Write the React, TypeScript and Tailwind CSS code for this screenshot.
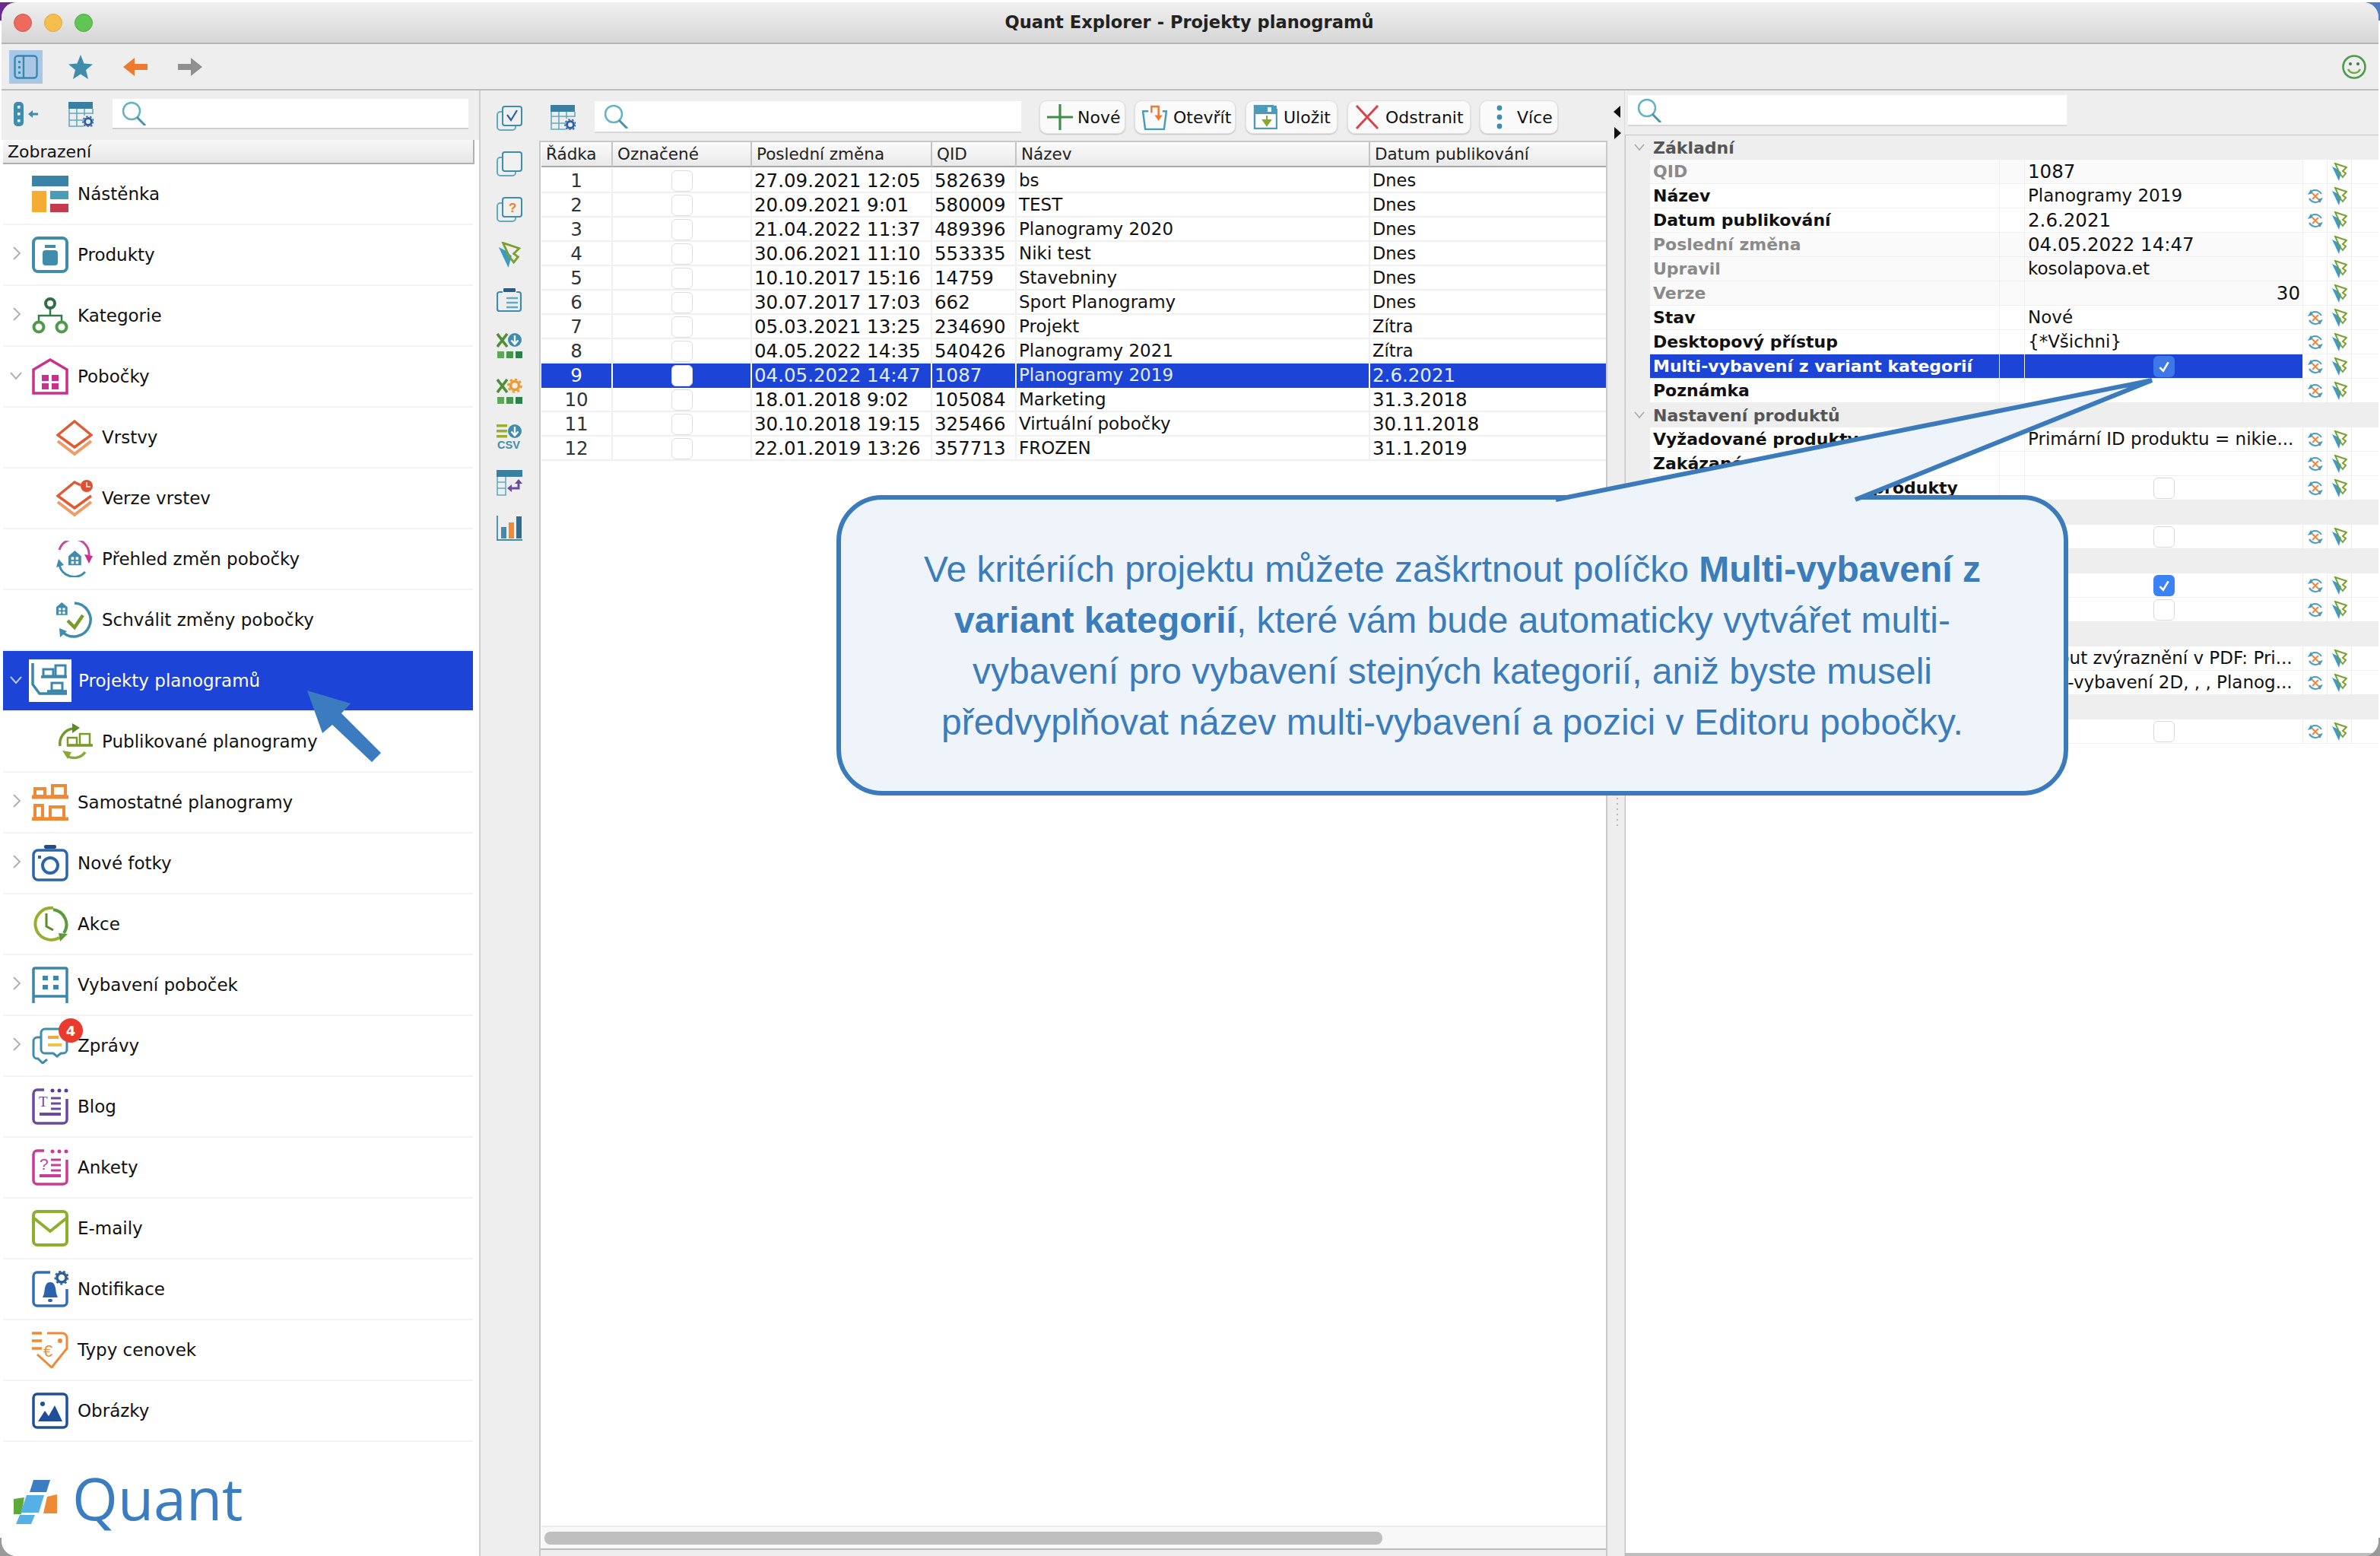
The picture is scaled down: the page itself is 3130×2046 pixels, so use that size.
import type { ReactNode } from 'react';

const base = 'w-[48px] h-[48px] shrink-0';

function Svg({ children, box = 48, className = base }: { children: ReactNode; box?: number; className?: string }) {
  return (
    <svg viewBox={`0 0 ${box} ${box}`} className={className} fill="none">
      {children}
    </svg>
  );
}

const House = ({ x, y, s, c }: { x: number; y: number; s: number; c: string }) => (
  <g transform={`translate(${x} ${y}) scale(${s})`}>
    <path d="M0 6 L7 0 L14 6 V16 H0 Z" fill={c} />
    <rect x="3" y="7" width="3" height="3" fill="#fff" />
    <rect x="8" y="7" width="3" height="3" fill="#fff" />
    <rect x="3" y="11.5" width="3" height="3" fill="#fff" />
    <rect x="8" y="11.5" width="3" height="3" fill="#fff" />
  </g>
);

// sidebar icons
const icons: Record<string, ReactNode> = {
  nastenka: (
    <Svg>
      <rect width="48" height="14" fill="#3a82a6" />
      <rect y="20" width="19" height="28" fill="#f4ac35" />
      <rect x="24" y="20" width="24" height="11" fill="#4a9cb8" />
      <rect x="24" y="37" width="24" height="11" fill="#c43a4e" />
    </Svg>
  ),
  produkty: (
    <Svg>
      <rect x="2" y="2" width="44" height="44" rx="6" stroke="#3f8cad" strokeWidth="4" />
      <rect x="17" y="11" width="14" height="4" fill="#3f8cad" />
      <rect x="14" y="18" width="20" height="20" rx="4" fill="#3f8cad" />
    </Svg>
  ),
  kategorie: (
    <Svg>
      <path d="M24 14 V24 M9 33 V24 H39 V33" stroke="#357a4a" strokeWidth="2.5" />
      <circle cx="24" cy="8" r="6" stroke="#2f6e44" strokeWidth="4" fill="#fff" />
      <circle cx="9" cy="39" r="6.5" stroke="#4e9a4a" strokeWidth="4" fill="#fff" />
      <circle cx="39" cy="39" r="6.5" stroke="#4e9a4a" strokeWidth="4" fill="#fff" />
    </Svg>
  ),
  pobocky: (
    <Svg>
      <path d="M2 46 V15 L24 2 L46 15 V46 Z" stroke="#c9318f" strokeWidth="3.5" />
      <rect x="13" y="22" width="9" height="8" fill="#c9318f" />
      <rect x="26" y="22" width="9" height="8" fill="#c9318f" />
      <rect x="13" y="33" width="9" height="8" fill="#c9318f" />
      <rect x="26" y="33" width="9" height="8" fill="#c9318f" />
    </Svg>
  ),
  vrstvy: (
    <Svg>
      <path d="M24 3 L46 21 L24 37 L2 21 Z" stroke="#e05a34" strokeWidth="3.5" />
      <path d="M2 29 L24 46 L46 29" stroke="#f09a68" strokeWidth="4" />
    </Svg>
  ),
  verze: (
    <Svg>
      <path d="M32 7 L24 3 L2 21 L24 37 L46 21" stroke="#e05a34" strokeWidth="3.5" />
      <path d="M2 29 L24 46 L46 29" stroke="#f09a68" strokeWidth="4" />
      <circle cx="40" cy="8" r="8" fill="#e05030" />
      <path d="M40 3 V9 H45" stroke="#fff" strokeWidth="1.5" />
    </Svg>
  ),
  prehled: (
    <Svg>
      <path d="M4 12 A20 20 0 0 1 43 20" stroke="#c9489a" strokeWidth="3" />
      <path d="M37 18 L48 20 L43 30 Z" fill="#c9318f" />
      <path d="M38 41 A20 20 0 0 1 4 32" stroke="#3f8cad" strokeWidth="3" />
      <path d="M0 35 L3 24 L10 32 Z" fill="#3f8cad" />
      <House x={16} y={13} s={1.2} c="#3f8cad" />
    </Svg>
  ),
  schvalit: (
    <Svg>
      <path d="M24 2 A22 22 0 1 1 8 40" stroke="#3f8cad" strokeWidth="3.5" />
      <path d="M5 47 L4 35 L14 39 Z" fill="#3f8cad" />
      <path d="M15 25 L24 34 L35 18" stroke="#7a9a2a" strokeWidth="4.5" />
      <House x={0} y={1} s={1.05} c="#3f8cad" />
    </Svg>
  ),
  publikovane: (
    <Svg>
      <path d="M5 30 A20 20 0 0 1 22 7" stroke="#6f9a30" strokeWidth="3.5" />
      <path d="M21 0 L31 6 L21 13 Z" fill="#5d8a2a" />
      <path d="M38 38 A18 18 0 0 1 16 44" stroke="#8aa83a" strokeWidth="3.5" />
      <path d="M8 36 L20 38 L15 47 Z" fill="#8aa83a" />
      <path d="M14 29 H48" stroke="#7a9a2a" strokeWidth="3.5" />
      <rect x="15" y="19" width="12" height="10" stroke="#7a9a2a" strokeWidth="2.5" />
      <rect x="31" y="14" width="13" height="15" stroke="#7a9a2a" strokeWidth="2.5" />
    </Svg>
  ),
  samostatne: (
    <Svg>
      <path d="M0 17 H48 M0 46 H48" stroke="#ee8a35" strokeWidth="5" />
      <rect x="4" y="6" width="13" height="10" stroke="#ee8a35" strokeWidth="4" />
      <rect x="27" y="2" width="17" height="14" stroke="#ee8a35" strokeWidth="4" />
      <rect x="4" y="28" width="10" height="17" stroke="#ee8a35" strokeWidth="4" />
      <rect x="24" y="30" width="18" height="15" stroke="#ee8a35" strokeWidth="4" />
    </Svg>
  ),
  fotky: (
    <Svg>
      <rect x="2" y="7" width="44" height="39" rx="6" stroke="#2b66a8" strokeWidth="3.5" />
      <rect x="16" y="0" width="16" height="5" rx="2" fill="#1f4f88" />
      <circle cx="24" cy="27" r="10" stroke="#2b66a8" strokeWidth="4" />
      <rect x="8" y="14" width="4" height="4" fill="#2b66a8" />
    </Svg>
  ),
  akce: (
    <Svg>
      <path d="M28 3 A21 21 0 1 0 36 42" stroke="#9aae2e" strokeWidth="4" />
      <path d="M28 5 A20 20 0 0 1 42 36" stroke="#5d9a3e" strokeWidth="4" />
      <path d="M35 36 L47 37 L37 47 Z" fill="#5d9a3e" />
      <path d="M19 10 V27 L28 32" stroke="#5d8a2a" strokeWidth="3" />
    </Svg>
  ),
  vybaveni: (
    <Svg>
      <path d="M2 48 V4 a2 2 0 0 1 2 -2 H44 a2 2 0 0 1 2 2 V48 M2 39 H46" stroke="#3a87ab" strokeWidth="3.5" />
      <rect x="14" y="12" width="7" height="6" fill="#3a87ab" />
      <rect x="28" y="12" width="7" height="6" fill="#3a87ab" />
      <rect x="14" y="24" width="7" height="6" fill="#3a87ab" />
      <rect x="28" y="24" width="7" height="6" fill="#3a87ab" />
    </Svg>
  ),
  zpravy: (
    <Svg>
      <path d="M12 13 H7 a5 5 0 0 0 -5 5 V36 a5 5 0 0 0 5 5 H8 L14 47 L20 42" stroke="#3f8cad" strokeWidth="3" />
      <path d="M17 2 H41 a5 5 0 0 1 5 5 V29 a5 5 0 0 1 -5 5 H38 L33 38 L28 34 H17 a5 5 0 0 1 -5 -5 V7 a5 5 0 0 1 5 -5 Z" stroke="#3f8cad" strokeWidth="3" fill="#fff" />
      <rect x="21" y="11" width="14" height="4" fill="#f0a838" />
      <rect x="21" y="21" width="18" height="4" fill="#f0c048" />
    </Svg>
  ),
  blog: (
    <Svg>
      <path d="M16 2 H7 a5 5 0 0 0 -5 5 V41 a5 5 0 0 0 5 5 H41 a5 5 0 0 0 5 -5 V14" stroke="#6a4aa0" strokeWidth="3.5" />
      <circle cx="27" cy="3" r="2.5" fill="#5a3a98" />
      <circle cx="36" cy="3" r="2.5" fill="#5a3a98" />
      <circle cx="45" cy="3" r="2.5" fill="#5a3a98" />
      <text x="9" y="24" fontFamily="Liberation Serif, serif" fontSize="19" fill="#6a4aa0">T</text>
      <path d="M25 13 H38 M25 20 H38 M25 27 H38" stroke="#6a4aa0" strokeWidth="3" />
      <path d="M10 34 H38" stroke="#6a4aa0" strokeWidth="4" />
    </Svg>
  ),
  ankety: (
    <Svg>
      <path d="M16 2 H7 a5 5 0 0 0 -5 5 V41 a5 5 0 0 0 5 5 H41 a5 5 0 0 0 5 -5 V14" stroke="#cc3a98" strokeWidth="3.5" />
      <circle cx="27" cy="3" r="2.5" fill="#cc3a98" />
      <circle cx="36" cy="3" r="2.5" fill="#cc3a98" />
      <circle cx="45" cy="3" r="2.5" fill="#cc3a98" />
      <text x="10" y="27" fontFamily="Liberation Sans, sans-serif" fontSize="21" fill="#cc3a98">?</text>
      <path d="M25 14 H38 M25 21 H38 M25 28 H38" stroke="#cc3a98" strokeWidth="3" />
      <path d="M10 35 H38" stroke="#cc3a98" strokeWidth="4" />
    </Svg>
  ),
  emaily: (
    <Svg>
      <rect x="2" y="2" width="44" height="44" rx="5" stroke="#8eae2e" strokeWidth="4" />
      <path d="M3 11 L24 28 L45 11" stroke="#8eae2e" strokeWidth="4" />
    </Svg>
  ),
  notifikace: (
    <Svg>
      <path d="M24 2 H7 a5 5 0 0 0 -5 5 V41 a5 5 0 0 0 5 5 H41 a5 5 0 0 0 5 -5 V24" stroke="#2f6eb8" strokeWidth="3.5" />
      <path d="M24 15 C17 15 17 23 16 30 L14 35 H34 L32 30 C31 23 31 15 24 15 Z" fill="#2b62ac" />
      <rect x="21" y="37" width="6" height="4" rx="2" fill="#2b62ac" />
      <circle cx="39" cy="9" r="6" stroke="#2b5f98" strokeWidth="3.5" />
      <circle cx="39" cy="9" r="8.5" stroke="#2b5f98" strokeWidth="2" strokeDasharray="3 3" />
    </Svg>
  ),
  cenovky: (
    <Svg>
      <path d="M0 2 H13 M0 12 H13 M0 22 H13" stroke="#ee8a35" strokeWidth="3.5" />
      <path d="M20 2 H40 a6 6 0 0 1 6 6 V22 L26 47 L7 30" stroke="#ee8a35" strokeWidth="3" />
      <circle cx="37" cy="12" r="3" fill="#ee8a35" />
      <text x="15" y="33" fontFamily="Liberation Sans, sans-serif" fontSize="22" fill="#ee8a35">€</text>
    </Svg>
  ),
  obrazky: (
    <Svg>
      <rect x="2" y="2" width="44" height="44" rx="5" stroke="#1f4f98" strokeWidth="3.5" />
      <circle cx="14" cy="15" r="3" fill="#1f4f98" />
      <path d="M8 38 L17 24 L22 31 L30 17 L40 38 Z" fill="#1f4f98" />
    </Svg>
  ),
  projekty: (
    <svg viewBox="0 0 56 56" className="w-[56px] h-[56px] shrink-0 bg-white">
      <path d="M5 5 V33 L14 45 H50 M16 23 H50" fill="none" stroke="#3a87ab" strokeWidth="3.5" />
      <rect x="19" y="13" width="13" height="9" fill="none" stroke="#3a87ab" strokeWidth="3" />
      <rect x="35" y="8" width="13" height="14" fill="none" stroke="#3a87ab" strokeWidth="3" />
      <rect x="30" y="31" width="14" height="10" fill="none" stroke="#3a87ab" strokeWidth="3" />
      <path d="M24 42 H50" stroke="#3a87ab" strokeWidth="3.5" />
    </svg>
  ),
};

type NavItem = { label: string; icon: string; sub?: boolean; chevron?: 'right' | 'down'; selected?: boolean; badge?: string };

const nav: NavItem[] = [
  { label: 'Nástěnka', icon: 'nastenka' },
  { label: 'Produkty', icon: 'produkty', chevron: 'right' },
  { label: 'Kategorie', icon: 'kategorie', chevron: 'right' },
  { label: 'Pobočky', icon: 'pobocky', chevron: 'down' },
  { label: 'Vrstvy', icon: 'vrstvy', sub: true },
  { label: 'Verze vrstev', icon: 'verze', sub: true },
  { label: 'Přehled změn pobočky', icon: 'prehled', sub: true },
  { label: 'Schválit změny pobočky', icon: 'schvalit', sub: true },
  { label: 'Projekty planogramů', icon: 'projekty', chevron: 'down', selected: true },
  { label: 'Publikované planogramy', icon: 'publikovane', sub: true },
  { label: 'Samostatné planogramy', icon: 'samostatne', chevron: 'right' },
  { label: 'Nové fotky', icon: 'fotky', chevron: 'right' },
  { label: 'Akce', icon: 'akce' },
  { label: 'Vybavení poboček', icon: 'vybaveni', chevron: 'right' },
  { label: 'Zprávy', icon: 'zpravy', chevron: 'right', badge: '4' },
  { label: 'Blog', icon: 'blog' },
  { label: 'Ankety', icon: 'ankety' },
  { label: 'E-maily', icon: 'emaily' },
  { label: 'Notifikace', icon: 'notifikace' },
  { label: 'Typy cenovek', icon: 'cenovky' },
  { label: 'Obrázky', icon: 'obrazky' },
];

const tableRows = [
  ['1', '27.09.2021 12:05', '582639', 'bs', 'Dnes'],
  ['2', '20.09.2021 9:01', '580009', 'TEST', 'Dnes'],
  ['3', '21.04.2022 11:37', '489396', 'Planogramy 2020', 'Dnes'],
  ['4', '30.06.2021 11:10', '553335', 'Niki test', 'Dnes'],
  ['5', '10.10.2017 15:16', '14759', 'Stavebniny', 'Dnes'],
  ['6', '30.07.2017 17:03', '662', 'Sport Planogramy', 'Dnes'],
  ['7', '05.03.2021 13:25', '234690', 'Projekt', 'Zítra'],
  ['8', '04.05.2022 14:35', '540426', 'Planogramy 2021', 'Zítra'],
  ['9', '04.05.2022 14:47', '1087', 'Planogramy 2019', '2.6.2021'],
  ['10', '18.01.2018 9:02', '105084', 'Marketing', '31.3.2018'],
  ['11', '30.10.2018 19:15', '325466', 'Virtuální pobočky', '30.11.2018'],
  ['12', '22.01.2019 13:26', '357713', 'FROZEN', '31.1.2019'],
];

type Prop = {
  section?: boolean;
  label?: string;
  value?: string;
  tone?: 'bold' | 'muted';
  num?: boolean;
  right?: boolean;
  check?: 'on' | 'off';
  selected?: boolean;
  locked?: boolean;
  flush?: boolean;
};

const props: Prop[] = [
  { section: true, label: 'Základní' },
  { label: 'QID', value: '1087', tone: 'muted', num: true, locked: true },
  { label: 'Název', value: 'Planogramy 2019', tone: 'bold' },
  { label: 'Datum publikování', value: '2.6.2021', tone: 'bold', num: true },
  { label: 'Poslední změna', value: '04.05.2022 14:47', tone: 'muted', num: true, locked: true },
  { label: 'Upravil', value: 'kosolapova.et', tone: 'muted', locked: true },
  { label: 'Verze', value: '30', tone: 'muted', num: true, right: true, locked: true },
  { label: 'Stav', value: 'Nové', tone: 'bold' },
  { label: 'Desktopový přístup', value: '{*Všichni}', tone: 'bold' },
  { label: 'Multi-vybavení z variant kategorií', check: 'on', selected: true },
  { label: 'Poznámka', tone: 'bold' },
  { section: true, label: 'Nastavení produktů' },
  { label: 'Vyžadované produkty', value: 'Primární ID produktu = nikie...', tone: 'bold' },
  { label: 'Zakázané produkty', tone: 'bold' },
  { label: 'Použít pouze povolené produkty', tone: 'bold', check: 'off' },
  { section: true },
  { check: 'off' },
  { section: true },
  { check: 'on' },
  { check: 'off' },
  { section: true },
  { value: 'Layout zvýraznění v PDF: Pri...' },
  { value: 'Multi-vybavení 2D, , , Planog...', flush: true },
  { section: true },
  { check: 'off' },
];

const SearchIcon = () => (
  <svg viewBox="0 0 32 32" className="w-[32px] h-[32px] shrink-0" fill="none">
    <circle cx="13" cy="13" r="11" stroke="#62b2c4" strokeWidth="2.5" />
    <path d="M20 21 L31 32" stroke="#4a90a8" strokeWidth="3" />
  </svg>
);

const GridGear = () => (
  <svg viewBox="0 0 33 33" className="w-[33px] h-[33px] shrink-0" fill="none">
    <rect width="32" height="9" fill="#3a7fa2" />
    <path d="M1 9 V32 H20 M11 9 V32 M21 9 V18 M1 15 H32 M1 24 H20 M32 9 V16" stroke="#62aac0" strokeWidth="1.6" />
    <circle cx="26" cy="26" r="4.5" stroke="#2b5fa8" strokeWidth="3" />
    <circle cx="26" cy="26" r="7" stroke="#2b5fa8" strokeWidth="1.6" strokeDasharray="2.5 2.5" />
  </svg>
);

const ResetIcon = () => (
  <svg viewBox="0 0 20 24" className="w-[20px] h-[24px]" fill="none">
    <path d="M4 6 A9.5 9.5 0 0 1 18 9" stroke="#4a9cc0" strokeWidth="2" />
    <path d="M16 18 A9.5 9.5 0 0 1 2 15" stroke="#4a9cc0" strokeWidth="2" />
    <path d="M0 10 L4 3 L7 8 Z M20 14 L16 21 L13 16 Z" fill="#4a9cc0" />
    <path d="M6 8 L14 16 M14 8 L6 16" stroke="#ee8a45" strokeWidth="2.2" />
  </svg>
);

const CursorIcon = ({ className = 'w-[20px] h-[24px]' }: { className?: string }) => (
  <svg viewBox="0 0 20 24" className={className} fill="none">
    <path d="M0 5 L9 24 L12 13 L6 8 Z" fill="#3a9cc4" />
    <path d="M4 1 L19 6 L14 11 L18 14 L14 19 L10 14 Z" stroke="#7aa02e" strokeWidth="2" />
  </svg>
);

const stripIcon = 'w-[34px] h-[34px]';

const strip: ReactNode[] = [
  <Svg box={34} className={stripIcon}>
    <rect x="1" y="9" width="24" height="24" rx="4" stroke="#62aac0" strokeWidth="2" />
    <rect x="8" y="2" width="25" height="25" rx="3" fill="#f0f0f0" stroke="#3f8cad" strokeWidth="2" />
    <path d="M14 13 L19 20 L27 7" stroke="#2b5fa8" strokeWidth="2.2" />
  </Svg>,
  <Svg box={34} className={stripIcon}>
    <rect x="1" y="9" width="24" height="24" rx="4" stroke="#62aac0" strokeWidth="2" />
    <rect x="8" y="2" width="25" height="25" rx="3" fill="#f0f0f0" stroke="#3f8cad" strokeWidth="2" />
  </Svg>,
  <Svg box={34} className={stripIcon}>
    <rect x="1" y="9" width="24" height="24" rx="4" stroke="#62aac0" strokeWidth="2" />
    <rect x="8" y="2" width="25" height="25" rx="3" fill="#f0f0f0" stroke="#3f8cad" strokeWidth="2" />
    <text x="16" y="21" fontFamily="Liberation Sans, sans-serif" fontWeight="700" fontSize="17" fill="#e8802e">?</text>
  </Svg>,
  <CursorIcon className="w-[34px] h-[34px]" />,
  <Svg box={34} className={stripIcon}>
    <path d="M8 6 H4 a3 3 0 0 0 -3 3 V28 a3 3 0 0 0 3 3 H29 a3 3 0 0 0 3 -3 V9 a3 3 0 0 0 -3 -3 H26" stroke="#3f8cad" strokeWidth="2.2" />
    <rect x="9" y="1" width="16" height="5" rx="1" fill="#1f5f88" />
    <path d="M13 14 H28 M13 20 H28 M13 26 H28" stroke="#62aac0" strokeWidth="2.4" />
  </Svg>,
  <Svg box={34} className={stripIcon}>
    <path d="M1 1 L14 18 M14 1 L1 18" stroke="#4f8f3a" strokeWidth="3.6" />
    <circle cx="24" cy="9" r="9" fill="#3f8cad" />
    <path d="M24 3 V14 M19.5 9.5 L24 14.5 L28.5 9.5" stroke="#fff" strokeWidth="2.4" />
    <rect x="1" y="24" width="9" height="9" fill="#5fa85a" />
    <rect x="13" y="24" width="9" height="9" fill="#4a9650" />
    <rect x="25" y="24" width="9" height="9" fill="#2f7f4a" />
  </Svg>,
  <Svg box={34} className={stripIcon}>
    <path d="M1 1 L14 18 M14 1 L1 18" stroke="#4f8f3a" strokeWidth="3.6" />
    <circle cx="24" cy="9" r="5.5" stroke="#ee9a30" strokeWidth="3.5" />
    <circle cx="24" cy="9" r="8.5" stroke="#ee9a30" strokeWidth="2.6" strokeDasharray="3.4 3.2" />
    <rect x="1" y="24" width="9" height="9" fill="#5fa85a" />
    <rect x="13" y="24" width="9" height="9" fill="#4a9650" />
    <rect x="25" y="24" width="9" height="9" fill="#2f7f4a" />
  </Svg>,
  <Svg box={34} className={stripIcon}>
    <rect x="0" y="0" width="14" height="3.5" fill="#9aae2e" />
    <rect x="0" y="7" width="14" height="3.5" fill="#9aae2e" />
    <rect x="0" y="14" width="14" height="3.5" fill="#9aae2e" />
    <circle cx="24" cy="9" r="9" fill="#3f8cad" />
    <path d="M24 3 V14 M19.5 9.5 L24 14.5 L28.5 9.5" stroke="#fff" strokeWidth="2.4" />
    <text x="1" y="32" fontFamily="Liberation Sans, sans-serif" fontWeight="700" fontSize="14.5" fill="#3f8cad">CSV</text>
  </Svg>,
  <Svg box={34} className={stripIcon}>
    <rect width="34" height="9" fill="#3a7fa2" />
    <path d="M1 9 V33 H12 V9 M1 16 H12 M1 24 H12" stroke="#62aac0" strokeWidth="1.6" />
    <path d="M29 14 V24 H19" stroke="#6a4aa0" strokeWidth="3" />
    <path d="M24 18 L29 12 L34 18 Z M20 19 L14 24 L20 29 Z" fill="#6a4aa0" />
  </Svg>,
  <Svg box={34} className={stripIcon}>
    <path d="M1 0 V32 H34" stroke="#3f8cad" strokeWidth="1.8" />
    <rect x="6" y="15" width="7" height="15" fill="#3f8cad" />
    <rect x="16" y="9" width="7" height="21" fill="#ee8a35" />
    <rect x="26" y="1" width="7" height="29" fill="#2f6f94" />
  </Svg>,
];

const DATE = 'text-[24.5px]';

function Chevron({ dir, white }: { dir: 'right' | 'down'; white?: boolean }) {
  const stroke = white ? '#b8c8f0' : '#b0b0b0';
  return dir === 'right' ? (
    <svg viewBox="0 0 12 20" className="w-[12px] h-[20px] ml-[12px] -mt-[4px]" fill="none">
      <path d="M2 2 L10 10 L2 18" stroke={stroke} strokeWidth="2" />
    </svg>
  ) : (
    <svg viewBox="0 0 18 12" className="w-[18px] h-[12px] ml-[8px] -mt-[2px]" fill="none">
      <path d="M2 2 L9 10 L16 2" stroke={stroke} strokeWidth="2" />
    </svg>
  );
}

function NavRow({ item }: { item: NavItem }) {
  const lead = item.sub ? 'w-[70px]' : item.selected ? 'w-[34px]' : 'w-[38px]';
  return (
    <div
      className={`h-[80px] flex items-center border-b-2 border-[#f2f2f2] ${
        item.selected ? 'bg-[#1c44d6] text-white' : 'bg-white text-[#111]'
      }`}
    >
      <div className={`${lead} shrink-0`}>{item.chevron && <Chevron dir={item.chevron} white={item.selected} />}</div>
      <div className="relative shrink-0">
        {icons[item.icon]}
        {item.badge && (
          <span className="absolute left-[35px] -top-[12px] w-[32px] h-[32px] rounded-full bg-[#e93a2e] text-white text-[18px] font-bold flex items-center justify-center z-10">
            {item.badge}
          </span>
        )}
      </div>
      <span className={`text-[23px] whitespace-nowrap ${item.selected ? 'ml-[9px]' : 'ml-[12px]'}`}>{item.label}</span>
    </div>
  );
}

function Checkbox({ state, selected }: { state: 'on' | 'off'; selected?: boolean }) {
  if (state === 'on') {
    return (
      <span className={`w-[28px] h-[28px] rounded-[6px] flex items-center justify-center ${selected ? 'bg-[#3d78e6]' : 'bg-[#3b82f6]'}`}>
        <svg viewBox="0 0 16 16" className="w-[18px] h-[18px]" fill="none">
          <path d="M3 9 L7 13 L13 3" stroke="#fff" strokeWidth="2.4" />
        </svg>
      </span>
    );
  }
  return <span className="w-[28px] h-[28px] rounded-[6px] border border-[#d8d8d8] bg-white" />;
}

function ToolButton({ icon, label, width, gap }: { icon: ReactNode; label: string; width: string; gap: string }) {
  return (
    <div className={`${width} ${gap} h-[44px] flex items-center pl-[9px] rounded-[10px] bg-[#fafafa] border border-[#e2e2e2] shadow-[0_1px_2px_rgba(0,0,0,0.2)] text-[22px] text-[#111]`}>
      {icon}
      <span>{label}</span>
    </div>
  );
}

function PropRow({ row }: { row: Prop }) {
  if (row.section) {
    return (
      <div className="h-[32px] bg-[#eeeeee] flex items-center pl-[11px]">
        {row.label && (
          <>
            <svg viewBox="0 0 14 10" className="w-[14px] h-[10px]" fill="none">
              <path d="M1 1 L7 8 L13 1" stroke="#a8a8a8" strokeWidth="1.6" />
            </svg>
            <span className="ml-[11px] text-[22px] font-bold text-[#555]">{row.label}</span>
          </>
        )}
      </div>
    );
  }
  const labelTone = row.selected
    ? 'bg-[#1c44d6] text-white font-bold'
    : row.tone === 'muted'
      ? 'text-[#8a8a8a] font-bold'
      : 'text-[#111] font-bold';
  const cellBg = row.selected ? 'bg-[#1c44d6]' : row.locked ? 'bg-[#fafafa]' : 'bg-white';
  return (
    <div className="h-[32px] grid grid-cols-[32px_460px_33px_366px_32px_32px_1fr] border-b border-[#efefef] bg-white">
      <div className="bg-[#eeeeee]" />
      <div className={`${labelTone} ${row.locked ? 'bg-[#fafafa]' : ''} border-r border-[#efefef] pl-[4px] text-[22px] leading-[31px] whitespace-nowrap overflow-hidden`}>
        {row.label}
      </div>
      <div className={`${cellBg} border-r border-[#efefef]`} />
      <div
        className={`${cellBg} border-r border-[#efefef] ${row.flush ? 'pl-0' : 'pl-[4px]'} pr-[3px] leading-[31px] whitespace-nowrap overflow-hidden text-[#111] ${
          row.num ? DATE : 'text-[23px]'
        } ${row.right ? 'text-right' : ''} ${row.check ? 'flex items-center justify-center' : ''}`}
      >
        {row.check ? <Checkbox state={row.check} selected={row.selected} /> : row.value}
      </div>
      <div className="border-r border-[#efefef] flex items-center justify-center">{!row.locked && <ResetIcon />}</div>
      <div className="border-r border-[#efefef] flex items-center justify-center">
        <CursorIcon />
      </div>
      <div />
    </div>
  );
}

export default function App() {
  return (
    <div className="relative w-[3130px] h-[2046px] overflow-hidden bg-white font-['DejaVu_Sans',sans-serif]">
      {/* desktop showing at the window corners */}
      <div className="absolute left-0 top-[3px] w-[24px] h-[24px] bg-[#6a2c8e]" />
      <div className="absolute right-0 top-[3px] w-[24px] h-[24px] bg-[#4f7cc9]" />
      <div className="absolute left-0 bottom-0 w-[24px] h-[24px] bg-[#9a9a9a]" />
      <div className="absolute right-0 bottom-0 w-[24px] h-[24px] bg-[#9a9a9a]" />

      <div className="relative ml-[2px] mt-[3px] w-[3126px] h-[2043px] rounded-t-[20px] rounded-b-[20px] overflow-hidden flex flex-col bg-[#eeeeee]">
        {/* title bar */}
        <div className="h-[55px] shrink-0 flex items-center border-b-2 border-[#b4b4b4] bg-linear-to-b from-[#f0f0f0] to-[#d6d6d6] pl-[16px]">
          <div className="flex gap-[16px]">
            <span className="w-[24px] h-[24px] rounded-full bg-[#ed6a5e] border border-[#d9574c]" />
            <span className="w-[24px] h-[24px] rounded-full bg-[#f5bf4f] border border-[#dfa93e]" />
            <span className="w-[24px] h-[24px] rounded-full bg-[#61c554] border border-[#52ad46]" />
          </div>
          <div className="flex-1 text-center font-bold text-[22.6px] text-[#222] pr-[122px]">Quant Explorer - Projekty planogramů</div>
        </div>

        {/* toolbar */}
        <div className="h-[61px] shrink-0 flex items-center border-b-2 border-[#bdbdbd] pl-[10px] pr-[16px]">
          <div className="w-[44px] h-[44px] bg-[#a9c8e8] flex items-center justify-center">
            <svg viewBox="0 0 32 32" className="w-[32px] h-[32px]" fill="none">
              <rect x="1.5" y="1.5" width="29" height="29" rx="4" stroke="#3a87ab" strokeWidth="2.4" />
              <path d="M13 2 V30" stroke="#3a87ab" strokeWidth="2.4" />
              <rect x="6" y="8" width="3" height="3" fill="#3a87ab" />
              <rect x="6" y="15" width="3" height="3" fill="#3a87ab" />
              <rect x="6" y="22" width="3" height="3" fill="#3a87ab" />
            </svg>
          </div>
          <svg viewBox="0 0 32 32" className="w-[32px] h-[32px] ml-[34px]">
            <path d="M16 0 L20.5 11.5 L32 12.5 L23 20 L26 32 L16 25.5 L6 32 L9 20 L0 12.5 L11.5 11.5 Z" fill="#3f8cad" />
          </svg>
          <svg viewBox="0 0 32 24" className="w-[32px] h-[24px] ml-[40px]">
            <path d="M0 12 L15 0 V8 H32 V16 H15 V24 Z" fill="#ee7a30" />
          </svg>
          <svg viewBox="0 0 32 24" className="w-[32px] h-[24px] ml-[40px]">
            <path d="M32 12 L17 0 V8 H0 V16 H17 V24 Z" fill="#8f8f8f" />
          </svg>
          <svg viewBox="0 0 32 32" className="w-[32px] h-[32px] ml-auto" fill="none">
            <circle cx="16" cy="16" r="14.5" stroke="#4f9a4a" strokeWidth="2.6" />
            <circle cx="11" cy="12" r="2" fill="#3a7a44" />
            <circle cx="21" cy="12" r="2" fill="#3a7a44" />
            <path d="M8 19 A9 9 0 0 0 24 19" stroke="#6aaa3a" strokeWidth="2.4" />
          </svg>
        </div>

        <div className="flex-1 min-h-0 flex">
          {/* sidebar */}
          <div className="w-[628px] shrink-0 flex flex-col bg-white pl-[2px]">
            <div className="-ml-[2px] h-[65px] shrink-0 flex items-center bg-[#eeeeee] pl-[16px] pb-[3px]">
              <svg viewBox="0 0 32 32" className="w-[32px] h-[32px]">
                <rect width="13" height="32" rx="5" fill="#3f8cad" />
                <rect x="5" y="5" width="3.5" height="3.5" fill="#fff" />
                <rect x="5" y="14" width="3.5" height="3.5" fill="#fff" />
                <rect x="5" y="23" width="3.5" height="3.5" fill="#fff" />
                <path d="M19 16 L25 11 V14.5 H32 V17.5 H25 V21 Z" fill="#3f8cad" />
              </svg>
              <div className="ml-[40px]"><GridGear /></div>
              <div className="ml-[25px] w-[468px] h-[40px] bg-white border-b-2 border-[#cfcfcf] flex items-center pl-[12px]">
                <SearchIcon />
              </div>
            </div>
            <div className="w-[620px] h-[32px] shrink-0 flex items-center pl-[6px] text-[22px] text-[#111] bg-linear-to-b from-[#f8f8f8] to-[#e6e6e6] border-r-2 border-b-2 border-[#b0b0b0]">
              Zobrazení
            </div>
            <div className="w-[618px] flex flex-col">
              {nav.map((item) => (
                <NavRow key={item.label} item={item} />
              ))}
            </div>
            {/* logo */}
            <div className="flex items-center pl-[14px] mt-[42px]">
              <svg viewBox="0 0 58 58" className="w-[58px] h-[58px] mt-[2px]">
                <path d="M26 0 H48 L43 16 H21 Z" fill="#3a7dc0" />
                <path d="M0 25 L14 23 L10 45 L0 45 Z" fill="#5fa83a" />
                <path d="M17 20 H40 L33 43 H9 Z" fill="#55b0e6" />
                <path d="M44 22 L57 19 V44 L39 44 Z" fill="#ee8a35" />
                <path d="M8 46 H28 L23 58 H3 Z" fill="#55b0e6" />
              </svg>
              <span className="ml-[19px] font-['Open_Sans',sans-serif] text-[77px] leading-[80px] text-[#3a7dc0] -mt-[8px]">Quant</span>
            </div>
          </div>

          {/* center panel */}
          <div className="w-[1490px] shrink-0 flex border-l-2 border-[#cfcfcf]">
            <div className="w-[77px] shrink-0 flex flex-col items-center gap-[26px] pt-[19px] pr-[2px] bg-[#eeeeee]">
              {strip.map((icon, i) => (
                <div key={i} className="w-[34px] h-[34px]">
                  {icon}
                </div>
              ))}
            </div>
            <div className="w-[1411px] flex flex-col">
              <div className="h-[66px] shrink-0 flex items-center pl-[15px] pt-[4px]">
                <GridGear />
                <div className="ml-[25px] w-[561px] h-[42px] bg-white border-b-2 border-[#d8d8d8] flex items-center pl-[12px]">
                  <SearchIcon />
                </div>
                <div className="flex ml-[24px]">
                  <ToolButton
                    width="w-[113px]"
                    gap="mr-[12px]"
                    label="Nové"
                    icon={
                      <svg viewBox="0 0 32 32" className="w-[34px] h-[34px] mr-[6px] shrink-0">
                        <path d="M16 0 V32 M0 16 H32" stroke="#3f8f4a" strokeWidth="3" />
                      </svg>
                    }
                  />
                  <ToolButton
                    width="w-[133px]"
                    gap="mr-[13px]"
                    label="Otevřít"
                    icon={
                      <svg viewBox="0 0 32 32" className="w-[33px] h-[33px] mr-[8px] shrink-0" fill="none">
                        <path d="M8 8 H1 L4 31 H28 L31 8 H26" stroke="#4a9cb8" strokeWidth="2.4" />
                        <path d="M12 10 V2 H21 V14" stroke="#ee7a30" strokeWidth="2.4" />
                        <path d="M16 13 L21 20 L26 13 Z" fill="#ee7a30" />
                      </svg>
                    }
                  />
                  <ToolButton
                    width="w-[121px]"
                    gap="mr-[13px]"
                    label="Uložit"
                    icon={
                      <svg viewBox="0 0 32 32" className="w-[32px] h-[32px] mr-[8px] shrink-0" fill="none">
                        <path d="M2 1 H26 L31 6 V31 H2 Z" fill="#fff" stroke="#4a9cb8" strokeWidth="2.4" />
                        <path d="M2 1 H31 V12 H2 Z" fill="#4a9cb8" />
                        <rect x="19" y="3" width="5" height="6" fill="#fff" />
                        <path d="M18 14 V24 M13 20 L18 27 L23 20 Z" stroke="#8aa82e" strokeWidth="2" fill="#8aa82e" />
                      </svg>
                    }
                  />
                  <ToolButton
                    width="w-[162px]"
                    gap="mr-[12px]"
                    label="Odstranit"
                    icon={
                      <svg viewBox="0 0 32 32" className="w-[32px] h-[32px] mr-[8px] shrink-0">
                        <path d="M2 1 L30 31 M30 1 L2 31" stroke="#d8434a" strokeWidth="3" />
                      </svg>
                    }
                  />
                  <div className="w-[103px] h-[44px] flex items-center rounded-[10px] bg-[#fafafa] border border-[#e2e2e2] shadow-[0_1px_2px_rgba(0,0,0,0.2)] text-[22px] text-[#111] pl-[21px]">
                    <svg viewBox="0 0 8 32" className="w-[8px] h-[32px] mr-[19px]">
                      <circle cx="4" cy="4" r="3.4" fill="#3f8cad" />
                      <circle cx="4" cy="16" r="3.4" fill="#3f8cad" />
                      <circle cx="4" cy="28" r="3.4" fill="#3f8cad" />
                    </svg>
                    Více
                  </div>
                </div>
              </div>

              {/* table */}
              <div className="flex-1 min-h-0 flex flex-col w-[1405px] bg-white border-l-2 border-t-2 border-r-2 border-[#c8c8c8] pl-[1px]">
                <div className="h-[33px] shrink-0 grid grid-cols-[94px_183px_237px_111px_465px_1fr] border-b-2 border-[#a8a8a8] bg-linear-to-b from-[#fbfbfb] to-[#e9e9e9] text-[21.5px] text-[#222] leading-[32px]">
                  {['Řádka', 'Označené', 'Poslední změna', 'QID', 'Název', 'Datum publikování'].map((h) => (
                    <div key={h} className="pl-[6px] border-r-2 border-[#c4c4c4] last:border-r-0 whitespace-nowrap">
                      {h}
                    </div>
                  ))}
                </div>
                <div className="flex-1 min-h-0 pt-[2px]">
                  {tableRows.map((r) => {
                    const sel = r[0] === '9';
                    const line = sel ? 'border-white' : 'border-[#f0f0f0]';
                    return (
                      <div
                        key={r[0]}
                        className={`h-[32px] grid grid-cols-[94px_183px_237px_111px_465px_1fr] leading-[31px] whitespace-nowrap ${
                          sel ? 'bg-[#1c44d6] text-[#e4ecff]' : 'bg-white text-[#111] border-b-2 border-[#f0f0f0]'
                        }`}
                      >
                        <div className={`text-center ${DATE} ${sel ? 'text-white' : 'text-[#333]'} border-r-2 ${line}`}>{r[0]}</div>
                        <div className={`flex items-center justify-center border-r-2 ${line}`}>
                          <span className="w-[28px] h-[28px] rounded-[6px] border border-[#dcdcdc] bg-white" />
                        </div>
                        <div className={`pl-[3px] ${DATE} border-r-2 ${line}`}>{r[1]}</div>
                        <div className={`pl-[3px] ${DATE} border-r-2 ${line}`}>{r[2]}</div>
                        <div className={`pl-[3px] text-[23px] border-r-2 ${line}`}>{r[3]}</div>
                        <div className={`pl-[3px] ${/\d/.test(r[4]) ? DATE : 'text-[22.5px]'}`}>{r[4]}</div>
                      </div>
                    );
                  })}
                </div>
                <div className="h-[30px] shrink-0 flex items-center bg-[#f8f8f8] border-t-2 border-[#eaeaea] pl-[4px]">
                  <div className="w-[1102px] h-[17px] rounded-[8px] bg-[#bfbfbf]" />
                </div>
                <div className="h-[10px] shrink-0 -ml-[1px] bg-[#eeeeee] border-t-2 border-[#bdbdbd]" />
              </div>
            </div>
          </div>

          {/* splitter */}
          <div className="w-[17px] shrink-0 flex flex-col items-center pr-[2px] pt-[20px] border-r border-[#dcdcdc]">
            <svg viewBox="0 0 10 16" className="w-[10px] h-[16px]">
              <path d="M9 0 V16 L0 8 Z" fill="#111" />
            </svg>
            <svg viewBox="0 0 10 16" className="w-[10px] h-[16px] mt-[12px]">
              <path d="M1 0 V16 L10 8 Z" fill="#111" />
            </svg>
            <div className="mt-[866px] flex flex-col gap-[5px]">
              {[0, 1, 2, 3, 4, 5].map((n) => (
                <span key={n} className="w-[2px] h-[2px] bg-[#b8b8b8]" />
              ))}
            </div>
          </div>

          {/* right panel */}
          <div className="flex-1 min-w-0 flex flex-col">
            <div className="h-[58px] shrink-0 pl-[4px] pt-[6px]">
              <div className="w-[577px] h-[41px] bg-white border-b-2 border-[#d8d8d8] flex items-center pl-[12px]">
                <SearchIcon />
              </div>
            </div>
            <div className="flex-1 min-h-0 bg-white border-l border-t border-[#c4c4c4]">
              {props.map((row, i) => (
                <PropRow key={i} row={row} />
              ))}
            </div>
            <div className="h-[4px] shrink-0 bg-[#bdbdbd]" />
          </div>
        </div>
      </div>

      {/* annotation arrow over the sidebar */}
      <svg viewBox="0 0 105 100" className="absolute left-[400px] top-[905px] w-[105px] h-[100px]">
        <polygon points="4,3 61,20 49,33 101,85 89,97 37,48 24,59" fill="#3b7bbf" />
      </svg>

      {/* callout */}
      <div className="absolute left-[1100px] top-[651px] w-[1620px] h-[395px] rounded-[60px] border-[6px] border-[#3b7bbb] bg-[#eff4fa] flex items-center justify-center text-center font-['Liberation_Sans',sans-serif] text-[48px] leading-[67px] text-[#3b7cbb]">
        <p>
          Ve kritériích projektu můžete zaškrtnout políčko <b>Multi-vybavení z</b>
          <br />
          <b>variant kategorií</b>, které vám bude automaticky vytvářet multi-
          <br />
          vybavení pro vybavení stejných kategorií, aniž byste museli
          <br />
          předvyplňovat název multi-vybavení a pozici v Editoru pobočky.
        </p>
      </div>
      <svg viewBox="0 0 800 170" className="absolute left-[2040px] top-[495px] w-[800px] h-[170px]">
        <path d="M6 162 L790 5 L400 162" fill="#eff4fa" stroke="#3b7bbb" strokeWidth="6" strokeLinejoin="miter" />
      </svg>
    </div>
  );
}
